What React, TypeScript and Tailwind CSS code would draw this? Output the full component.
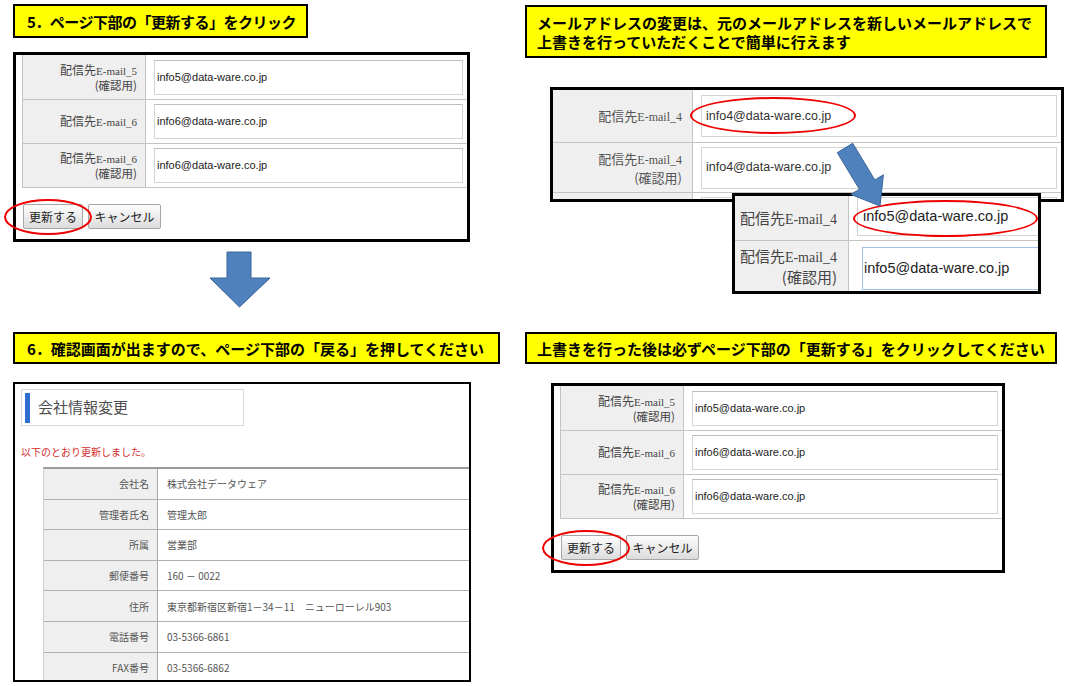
import React from 'react';

const jp = "font-['Noto_Sans_CJK_JP',sans-serif]";
const serif = "font-['Liberation_Serif',serif]";
const sans = "font-['Liberation_Sans',Arial,sans-serif]";

type Kids = { className?: string; children?: React.ReactNode };

const Note = ({ className = '', children }: Kids) => (
  <div
    className={`border-2 border-black bg-[#ffff00] font-bold text-black text-[15px] leading-[19px] whitespace-nowrap ${jp} ${className}`}
  >
    {children}
  </div>
);

const Ring = ({ className = '' }: Kids) => (
  <div className={`absolute rounded-[50%] border-[2.5px] border-[#ee0000] ${className}`} />
);

const Btn = ({ className = '', children }: Kids) => (
  <button
    className={`h-[25px] border border-[#a6a6a6] rounded-[2px] bg-linear-to-b from-[#fdfdfd] to-[#dcdcdc] text-[12px] text-[#222] ${jp} ${className}`}
  >
    {children}
  </button>
);

const mailRows = [
  { no: '5', confirm: true, value: 'info5@data-ware.co.jp', h: 'h-[45px]' },
  { no: '6', confirm: false, value: 'info6@data-ware.co.jp', h: 'h-[44px]' },
  { no: '6', confirm: true, value: 'info6@data-ware.co.jp', h: 'h-[44px]' },
];

// screenshot of the mail form bottom, used in step 5 and the last step
function MailForm({ className = '' }: Kids) {
  return (
    <div className={`relative h-[190px] border-[3px] border-black bg-white ${className}`}>
      <div className="ml-[6px] border-l border-[#c4c4c4]">
        {mailRows.map((r, i) => (
          <div key={i} className={`flex border-b border-[#c4c4c4] ${r.h}`}>
            <div className="w-[123px] shrink-0 bg-[#efefef] border-r border-[#c4c4c4] flex flex-col items-end justify-center pr-[8px] text-[12px] leading-[14px] text-[#444]">
              <div>
                <span className={jp}>配信先</span>
                <span className={`${serif} text-[11px]`}>E-mail_{r.no}</span>
              </div>
              {r.confirm && <div className={`${jp} text-[11.5px]`}>(確認用)</div>}
            </div>
            <div className="flex-1 flex items-center pl-[8px] pr-[4px]">
              <div
                className={`h-[35px] w-full border border-[#d4d4d4] border-t-[#bdbdbd] bg-white flex items-center pl-[2px] text-[11px] text-[#222] ${sans}`}
              >
                {r.value}
              </div>
            </div>
          </div>
        ))}
      </div>
      <div className="flex gap-[5px] ml-[7px] mt-[16px]">
        <Btn className="w-[60px]">更新する</Btn>
        <Btn className="w-[73px]">キャンセル</Btn>
      </div>
      <Ring className="left-[-12px] top-[144px] w-[88px] h-[36px]" />
    </div>
  );
}

const MailLabel = ({ size, confirm }: { size: 'md' | 'lg'; confirm?: boolean }) => (
  <>
    <div>
      <span className={jp}>配信先</span>
      <span className={`${serif} ${size === 'md' ? 'text-[12px]' : 'text-[14px]'}`}>E-mail_4</span>
    </div>
    {confirm && <div className={jp}>(確認用)</div>}
  </>
);

const company = [
  ['会社名', '株式会社データウェア'],
  ['管理者氏名', '管理太郎'],
  ['所属', '営業部'],
  ['郵便番号', '160 － 0022'],
  ['住所', '東京都新宿区新宿1－34－11　ニューローレル903'],
  ['電話番号', '03-5366-6861'],
  ['FAX番号', '03-5366-6862'],
];

function CompanyDone() {
  return (
    <div className={`w-[458px] h-[300px] border-2 border-black bg-white overflow-hidden pl-[6px] pt-[5px] ${jp}`}>
      <div className="w-[223px] h-[37px] border border-[#d9d9d9] flex items-center pl-[3px]">
        <div className="w-[5px] h-[30px] bg-[#2f6fd0]" />
        <span className="ml-[8px] text-[15px] text-[#4d4d4d]">会社情報変更</span>
      </div>
      <div className="mt-[19px] text-[10px] leading-[14px] text-[#d42b2b]">以下のとおり更新しました。</div>
      <div className="mt-[8px] ml-[22px] border-t-2 border-t-[#9a9a9a] border-l border-l-[#cfcfcf]">
        {company.map(([k, v]) => (
          <div key={k} className="flex h-[30.6px] border-b border-[#b0b0b0] text-[10px] text-[#555]">
            <div className="w-[114px] shrink-0 bg-[#efefef] border-r border-[#a8a8a8] flex items-center justify-end pr-[8px]">
              {k}
            </div>
            <div className="flex-1 flex items-center pl-[9px]">{v}</div>
          </div>
        ))}
      </div>
    </div>
  );
}

export default function App() {
  return (
    <div className="w-[1067px] h-[686px] bg-white overflow-hidden grid grid-cols-[520px_547px] grid-rows-[332px_354px]">
      {/* step 5 */}
      <div className="pl-[13px] pt-[4px] flex flex-col">
        <Note className="w-[295px] h-[34px] flex items-center pl-[12px] tracking-[-0.5px]">
          5．ページ下部の「更新する」をクリック
        </Note>
        <MailForm className="w-[457px] mt-[14px]" />
        <svg className="ml-[196px] mt-[9px]" width="62" height="58" viewBox="0 0 62 58">
          <polygon
            points="18,1 42,1 42,27 61,27 30.5,56 1,27 18,27"
            fill="#4f81bd"
            stroke="#3a659a"
            strokeWidth="1"
          />
        </svg>
      </div>

      {/* overwrite hint */}
      <div className="relative pl-[5px] pt-[5px]">
        <Note className="w-[522px] h-[53px] flex flex-col justify-center pl-[10px]">
          <div>メールアドレスの変更は、元のメールアドレスを新しいメールアドレスで</div>
          <div>上書きを行っていただくことで簡単に行えます</div>
        </Note>
        <div className="ml-[25px] mt-[29px] w-[514px] h-[115px] border-[3px] border-black bg-white overflow-hidden">
          <div className="flex h-[53px] border-b border-[#c4c4c4]">
            <div className="w-[140px] shrink-0 bg-[#efefef] border-r border-[#c4c4c4] flex flex-col items-end justify-center pr-[10px] text-[13px] leading-[16px] text-[#555]">
              <MailLabel size="md" />
            </div>
            <div className="flex-1 flex items-center pl-[8px] pr-[4px]">
              <div className={`h-[42px] w-full border border-[#d4d4d4] flex items-center pl-[4px] text-[12.5px] text-[#333] ${sans}`}>
                info4@data-ware.co.jp
              </div>
            </div>
          </div>
          <div className="flex h-[50px] border-b border-[#c4c4c4]">
            <div className="w-[140px] shrink-0 bg-[#efefef] border-r border-[#c4c4c4] flex flex-col items-end justify-center pr-[10px] text-[13px] leading-[17px] text-[#555]">
              <MailLabel size="md" confirm />
            </div>
            <div className="flex-1 flex items-center pl-[8px] pr-[4px]">
              <div className={`h-[42px] w-full border border-[#d4d4d4] flex items-center pl-[4px] text-[12.5px] text-[#333] ${sans}`}>
                info4@data-ware.co.jp
              </div>
            </div>
          </div>
          <div className="flex h-[20px]">
            <div className="w-[140px] shrink-0 bg-[#efefef] border-r border-[#c4c4c4]" />
            <div className="flex-1 pl-[8px] pr-[4px] pt-[4px]">
              <div className="h-[30px] w-full border border-[#d4d4d4]" />
            </div>
          </div>
        </div>

        {/* zoomed part of the form, after overwriting */}
        <div className="absolute left-[212px] top-[193px] w-[309px] h-[101px] border-[3px] border-black bg-white overflow-hidden">
          <div className="flex h-[45px] border-b border-[#c4c4c4]">
            <div className="w-[114px] shrink-0 bg-[#efefef] border-r border-[#c4c4c4] flex flex-col items-end justify-center pr-[11px] text-[15px] leading-[19px] text-[#444]">
              <MailLabel size="lg" />
            </div>
            <div className="flex-1 pl-[8px] pt-[1px]">
              <div className={`h-[39px] w-[200px] border border-[#d4d4d4] flex items-center pl-[5px] text-[14.5px] text-[#222] ${sans}`}>
                info5@data-ware.co.jp
              </div>
            </div>
          </div>
          <div className="flex h-[50px]">
            <div className="w-[114px] shrink-0 bg-[#efefef] border-r border-[#c4c4c4] flex flex-col items-end justify-center pr-[11px] text-[15px] leading-[19px] text-[#444]">
              <MailLabel size="lg" confirm />
            </div>
            <div className="flex-1 pl-[13px] pt-[6px]">
              <div className={`h-[43px] w-[200px] border border-[#9ec3e6] flex items-center pl-[1px] text-[14.5px] text-[#222] ${sans}`}>
                info5@data-ware.co.jp
              </div>
            </div>
          </div>
        </div>

        <Ring className="left-[170px] top-[97px] w-[166px] h-[37px]" />
        <Ring className="left-[333px] top-[200px] w-[185px] h-[37px]" />
        <svg className="absolute left-[310px] top-[135px]" width="60" height="75" viewBox="0 0 60 75">
          <polygon
            points="7.3,17.7 22.7,8.3 44.8,44.9 53.4,39.8 50,71 20.8,59.4 29.4,54.3"
            fill="#4f81bd"
            stroke="#3a659a"
            strokeWidth="1"
          />
        </svg>
      </div>

      {/* step 6 */}
      <div className="pl-[13px] flex flex-col">
        <Note className="w-[487px] h-[32px] flex items-center pl-[12px]">
          6．確認画面が出ますので、ページ下部の「戻る」を押してください
        </Note>
        <div className="mt-[18px]">
          <CompanyDone />
        </div>
      </div>

      {/* final step */}
      <div className="pl-[5px] flex flex-col">
        <Note className="w-[532px] h-[32px] flex items-center pl-[10px]">
          上書きを行った後は必ずページ下部の「更新する」をクリックしてください
        </Note>
        <MailForm className="w-[454px] mt-[19px] ml-[26px]" />
      </div>
    </div>
  );
}
